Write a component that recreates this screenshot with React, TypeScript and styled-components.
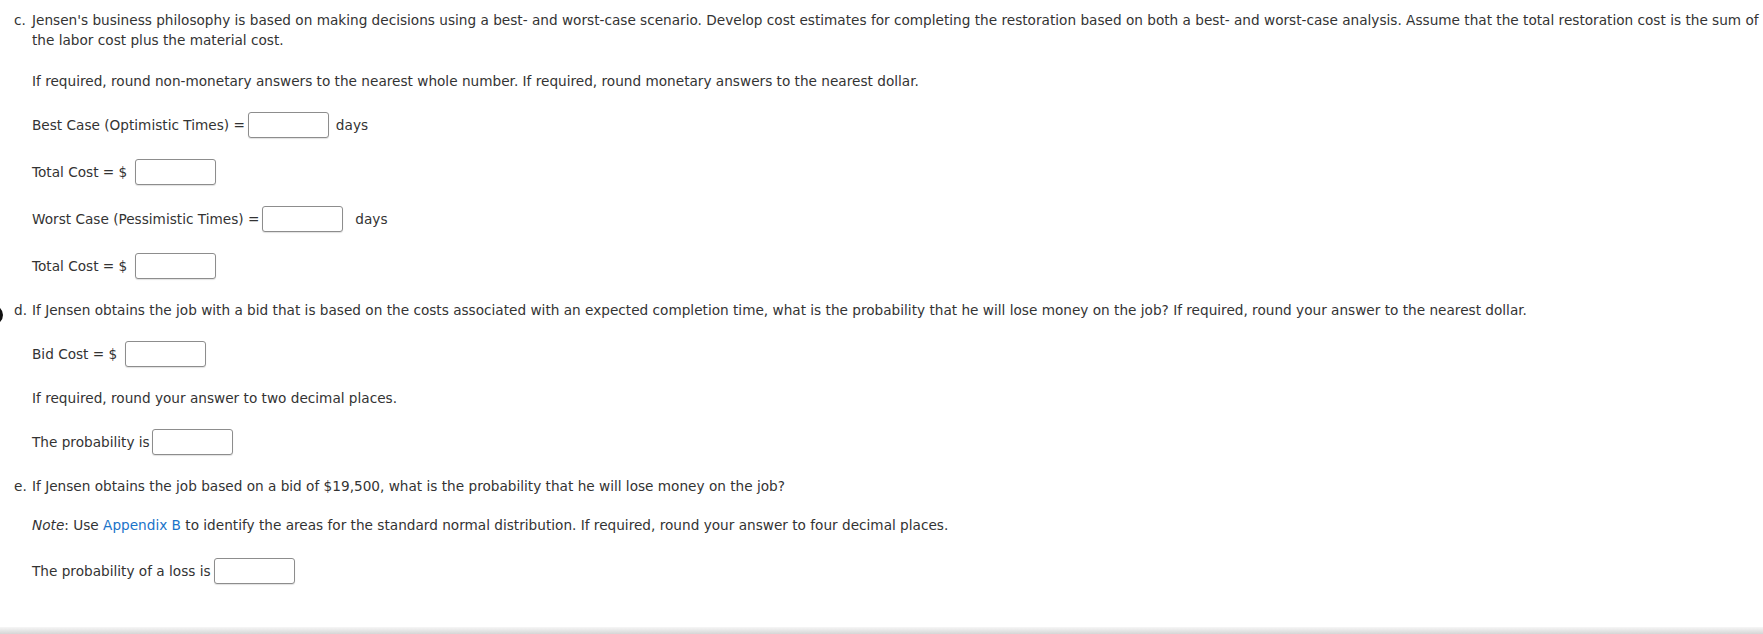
import React from "react";
import styled, { createGlobalStyle } from "styled-components";

const Global = createGlobalStyle`
  html, body { margin: 0; padding: 0; background: #fff; }
  body { font-family: "DejaVu Sans", Verdana, sans-serif; font-size: 13.65px; color: #333; }
`;

const Page = styled.div`
  height: 634px;
  display: flex;
  flex-direction: column;
  overflow: hidden;
`;

const Content = styled.div`
  flex: 1;
  padding: 10px 0 0 0;
  display: flex;
  flex-direction: column;
  gap: 21px;
`;

const BottomBar = styled.div`
  height: 7px;
  background: linear-gradient(#f6f6f6, #d6d6d6);
`;

const Part = styled.div`
  position: relative;
  display: flex;
  flex-direction: column;
  gap: 21px;
`;

const Question = styled.div`
  display: grid;
  grid-template-columns: 32px 1fr;
  line-height: 20px;
`;

const Marker = styled.span`
  padding-left: 14px;
`;

const Para = styled.div<{ $mt?: number; $mb?: number }>`
  padding-left: 32px;
  line-height: 20px;
  margin-top: ${(p) => p.$mt ?? 0}px;
  margin-bottom: ${(p) => p.$mb ?? 0}px;
`;

const Row = styled.div<{ $inputGap?: number }>`
  padding-left: 32px;
  height: 26px;
  display: flex;
  align-items: center;
  gap: ${(p) => p.$inputGap ?? 3}px;
`;

const Input = styled.input`
  box-sizing: border-box;
  width: 81px;
  height: 26px;
  border: 1px solid #8d8d8d;
  border-radius: 3px;
  background: #fff;
  margin: 0;
  padding: 0 4px;
  box-shadow: 0 1px 1px rgba(0, 0, 0, 0.12);
`;

const Unit = styled.span<{ $ml: number }>`
  margin-left: ${(p) => p.$ml}px;
`;

const Link = styled.a`
  color: #1a73c9;
  text-decoration: none;
`;

const FocusRing = styled.span`
  position: absolute;
  left: -17px;
  top: 5px;
  width: 20px;
  height: 20px;
  box-sizing: border-box;
  border: 3px solid #111;
  border-radius: 50%;
`;

export default function App() {
  return (
    <>
      <Global />
      <Page>
        <Content>
          <Part>
            <Question>
              <Marker>c.</Marker>
              <span>
                Jensen's business philosophy is based on making decisions using a best- and worst-case scenario. Develop cost estimates for completing the restoration based on both a best- and worst-case analysis. Assume that the total restoration cost is the sum of the labor cost plus the material cost.
              </span>
            </Question>
            <Para>
              If required, round non-monetary answers to the nearest whole number. If required, round monetary answers to the nearest dollar.
            </Para>
            <Row>
              <span>Best Case (Optimistic Times) =</span>
              <Input type="text" />
              <Unit $ml={4}>days</Unit>
            </Row>
            <Row $inputGap={8}>
              <span>Total Cost = $</span>
              <Input type="text" />
            </Row>
            <Row>
              <span>Worst Case (Pessimistic Times) =</span>
              <Input type="text" />
              <Unit $ml={9}>days</Unit>
            </Row>
            <Row $inputGap={8}>
              <span>Total Cost = $</span>
              <Input type="text" />
            </Row>
          </Part>
          <Part>
            <FocusRing />
            <Question>
              <Marker>d.</Marker>
              <span>
                If Jensen obtains the job with a bid that is based on the costs associated with an expected completion time, what is the probability that he will lose money on the job? If required, round your answer to the nearest dollar.
              </span>
            </Question>
            <Row $inputGap={8}>
              <span>Bid Cost = $</span>
              <Input type="text" />
            </Row>
            <Para>If required, round your answer to two decimal places.</Para>
            <Row $inputGap={2}>
              <span>The probability is</span>
              <Input type="text" />
            </Row>
          </Part>
          <Part>
            <Question>
              <Marker>e.</Marker>
              <span>
                If Jensen obtains the job based on a bid of $19,500, what is the probability that he will lose money on the job?
              </span>
            </Question>
            <Para $mt={-2} $mb={2}>
              <em>Note</em>: Use <Link href="#">Appendix B</Link> to identify the areas for the standard normal distribution. If required, round your answer to four decimal places.
            </Para>
            <Row $inputGap={3}>
              <span>The probability of a loss is</span>
              <Input type="text" />
            </Row>
          </Part>
        </Content>
        <BottomBar />
      </Page>
    </>
  );
}
